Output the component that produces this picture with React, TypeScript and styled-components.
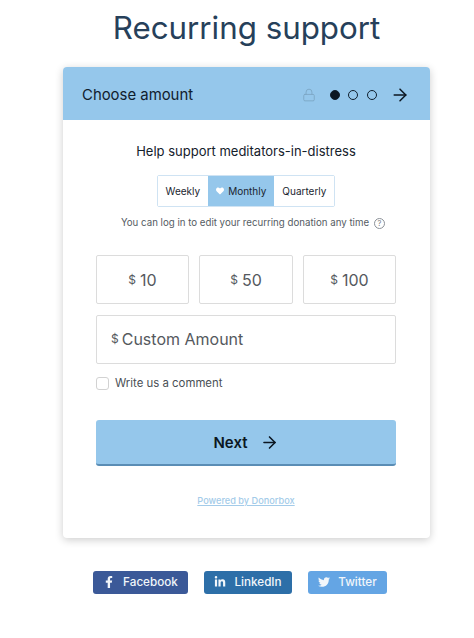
import React from "react";
import styled, { createGlobalStyle } from "styled-components";
import { ArrowRight, Lock } from "lucide-react";
import { FaFacebookF, FaHeart, FaLinkedinIn, FaTwitter } from "react-icons/fa";

const GlobalStyle = createGlobalStyle`
  html, body {
    margin: 0;
    padding: 0;
    background: #ffffff;
    font-family: "Inter", "Liberation Sans", sans-serif;
  }
`;

const amounts = [10, 50, 100];
const frequencies = ["Weekly", "Monthly", "Quarterly"];

const App: React.FC = () => {
  return (
    <Page>
      <GlobalStyle />
      <Title>Recurring support</Title>
      <Card>
        <CardHeader>
          <HeaderTitle>Choose amount</HeaderTitle>
          <Steps>
            <LockIcon size={14} strokeWidth={1.5} />
            <Dot $active />
            <Dot />
            <Dot />
            <ArrowRight size={20} strokeWidth={1.8} color="#0c1722" />
          </Steps>
        </CardHeader>
        <CardBody>
          <Heading>Help support meditators-in-distress</Heading>
          <Tabs>
            {frequencies.map((name) => (
              <Tab key={name} $active={name === "Monthly"}>
                {name === "Monthly" && <FaHeart size={8} color="#ffffff" />}
                {name}
              </Tab>
            ))}
          </Tabs>
          <Hint>
            You can log in to edit your recurring donation any time
            <HelpMark>?</HelpMark>
          </Hint>
          <AmountGrid>
            {amounts.map((value) => (
              <AmountBox key={value}>
                <Currency>$</Currency>
                {value}
              </AmountBox>
            ))}
          </AmountGrid>
          <CustomAmount>
            <Currency>$</Currency>
            Custom Amount
          </CustomAmount>
          <CommentRow>
            <CheckBox />
            Write us a comment
          </CommentRow>
          <NextButton>
            Next
            <ArrowRight size={19} strokeWidth={2} />
          </NextButton>
          <Powered>Powered by Donorbox</Powered>
        </CardBody>
      </Card>
      <Socials>
        <SocialButton $bg="#3b5998" $width={95}>
          <FaFacebookF size={12} />
          Facebook
        </SocialButton>
        <SocialButton $bg="#2d6fa8" $width={88}>
          <FaLinkedinIn size={12} />
          LinkedIn
        </SocialButton>
        <SocialButton $bg="#64a5e4" $width={79}>
          <FaTwitter size={12} />
          Twitter
        </SocialButton>
      </Socials>
    </Page>
  );
};

const Page = styled.div`
  width: 474px;
  height: 638px;
  overflow: hidden;
  box-sizing: border-box;
  padding: 0 44px 0 63px;
  display: flex;
  flex-direction: column;
`;

const Title = styled.h1`
  margin: 0;
  height: 67px;
  padding-top: 6px;
  box-sizing: border-box;
  font-size: 31.3px;
  line-height: 44px;
  font-weight: 400;
  text-align: center;
  white-space: nowrap;
  color: #26405a;
`;

const Card = styled.div`
  width: 367px;
  height: 471px;
  border-radius: 4px;
  background: #ffffff;
  box-shadow: 0 2px 8px rgba(0, 0, 0, 0.2);
  display: flex;
  flex-direction: column;
`;

const CardHeader = styled.div`
  height: 53px;
  padding: 3px 20px 0 19px;
  box-sizing: border-box;
  display: flex;
  align-items: center;
  justify-content: space-between;
  background: #95c7eb;
  border-radius: 4px 4px 0 0;
`;

const HeaderTitle = styled.div`
  font-size: 14.9px;
  color: #10202e;
`;

const Steps = styled.div`
  display: flex;
  align-items: center;
  gap: 8.5px;
`;

const LockIcon = styled(Lock)`
  color: #7ba6c4;
  margin-right: 5.5px;
`;

const Dot = styled.span<{ $active?: boolean }>`
  width: 10px;
  height: 10px;
  box-sizing: border-box;
  border-radius: 50%;
  border: 1.3px solid #10202e;
  background: ${(p) => (p.$active ? "#0c1722" : "transparent")};
  &:nth-of-type(3) {
    margin-right: 5px;
  }
`;

const CardBody = styled.div`
  flex: 1;
  padding: 0 34px 0 33px;
  display: flex;
  flex-direction: column;
  align-items: center;
`;

const Heading = styled.div`
  margin-top: 22px;
  font-size: 13px;
  line-height: 18px;
  color: #14202b;
  white-space: nowrap;
`;

const Tabs = styled.div`
  margin-top: 15px;
  height: 32px;
  box-sizing: border-box;
  display: flex;
  border: 1px solid #cfe3f3;
  border-radius: 2px;
`;

const Tab = styled.div<{ $active?: boolean }>`
  padding: 0 8px;
  display: flex;
  align-items: center;
  gap: 4px;
  font-size: 10px;
  color: #1a2530;
  background: ${(p) => (p.$active ? "#95c7eb" : "#ffffff")};
`;

const Hint = styled.div`
  margin: 9px 0 0 14px;
  display: flex;
  align-items: center;
  gap: 5px;
  font-size: 9.7px;
  line-height: 14px;
  color: #555c63;
  white-space: nowrap;
`;

const HelpMark = styled.span`
  width: 11px;
  height: 11px;
  box-sizing: border-box;
  border: 1px solid #8b9198;
  border-radius: 50%;
  font-size: 7.5px;
  line-height: 9px;
  text-align: center;
  color: #777d83;
`;

const AmountGrid = styled.div`
  margin-top: 25px;
  width: 100%;
  display: grid;
  grid-template-columns: 93px 94px 93px;
  justify-content: space-between;
`;

const AmountBox = styled.div`
  height: 49px;
  box-sizing: border-box;
  border: 1px solid #dcdcdc;
  border-radius: 2px;
  display: flex;
  align-items: center;
  justify-content: center;
  gap: 4px;
  font-size: 16px;
  color: #55595e;
`;

const Currency = styled.span`
  font-size: 12px;
`;

const CustomAmount = styled.div`
  margin-top: 11px;
  width: 100%;
  height: 49px;
  box-sizing: border-box;
  padding: 0 0 2px 14px;
  border: 1.5px solid #dcdcdc;
  border-radius: 2px;
  display: flex;
  align-items: center;
  gap: 3px;
  font-size: 16px;
  color: #55595e;
`;

const CommentRow = styled.div`
  margin-top: 12px;
  width: 100%;
  display: flex;
  align-items: center;
  gap: 6px;
  font-size: 11.4px;
  line-height: 14px;
  color: #4a4f55;
`;

const CheckBox = styled.span`
  width: 13px;
  height: 13px;
  box-sizing: border-box;
  border: 1px solid #d2d2d2;
  border-radius: 3px;
`;

const NextButton = styled.div`
  margin-top: 30px;
  width: 100%;
  height: 46px;
  box-sizing: border-box;
  border-radius: 3px;
  border-bottom: 2px solid #5a8db5;
  background: #95c7eb;
  display: flex;
  align-items: center;
  justify-content: center;
  gap: 12px;
  font-size: 15px;
  font-weight: 600;
  color: #0c1722;
`;

const Powered = styled.div`
  margin-top: 29px;
  font-size: 9.2px;
  line-height: 12px;
  font-weight: 500;
  color: #a3cbe9;
  text-decoration: underline;
`;

const Socials = styled.div`
  margin: 33px 0 0 30px;
  display: flex;
  gap: 16px;
`;

const SocialButton = styled.div<{ $bg: string; $width: number }>`
  width: ${(p) => p.$width}px;
  height: 23px;
  padding-bottom: 1px;
  box-sizing: border-box;
  border-radius: 3px;
  background: ${(p) => p.$bg};
  display: flex;
  align-items: center;
  justify-content: center;
  gap: 8px;
  font-size: 11.7px;
  font-weight: 500;
  color: #f2f6fa;
`;

export default App;
